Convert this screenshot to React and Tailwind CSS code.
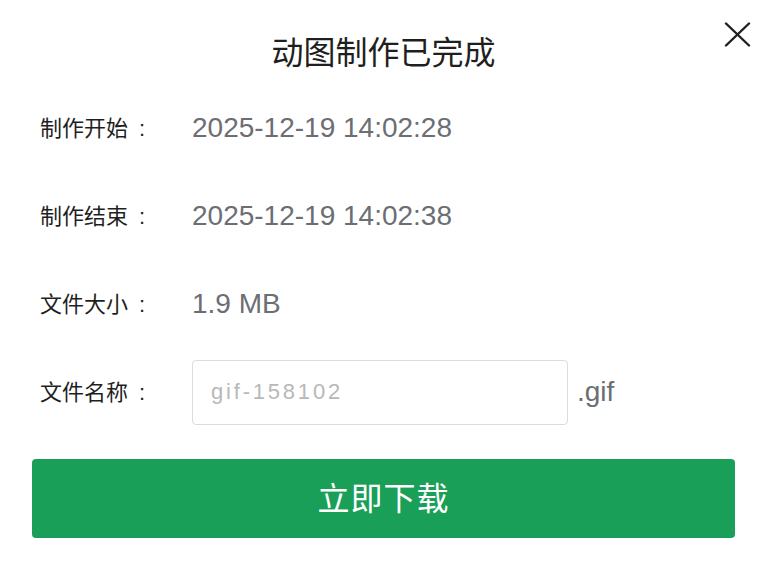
import React from 'react';

const rows = [
    { label: '制作开始', value: '2025-12-19 14:02:28' },
    { label: '制作结束', value: '2025-12-19 14:02:38' },
    { label: '文件大小', value: '1.9 MB' },
];

const FONT = "font-['Liberation_Sans','Noto_Sans_CJK_SC',sans-serif]";

const Label = ({ text }) => (
    <div className="w-[160px] shrink-0 pl-[8px] text-[22px] text-[#1f1f1f] flex items-center">
        <span>{text}</span>
        <span className="ml-[11px]">:</span>
    </div>
);

export default function App() {
    return (
        <div className={`relative w-full h-[567px] bg-white px-[32px] ${FONT}`}>
            {/* close button */}
            <button className="absolute top-[22px] right-[16px] text-[#1f1f1f]">
                <svg width="27" height="25" viewBox="0 0 27 25" fill="none" stroke="currentColor" strokeWidth="2.4" strokeLinecap="round">
                    <path d="M2 1.5 L25 23.5" />
                    <path d="M25 1.5 L2 23.5" />
                </svg>
            </button>

            <div className="h-[84px] pt-[33px] text-center">
                <h1 className="text-[32px] leading-[40px] text-[#1f1f1f]">动图制作已完成</h1>
            </div>

            {rows.map((r) => (
                <div key={r.label} className="h-[88px] flex items-center">
                    <Label text={r.label} />
                    <div className="text-[28px] text-[#6b6e73]">{r.value}</div>
                </div>
            ))}

            <div className="h-[88px] flex items-center">
                <Label text="文件名称" />
                <input
                    type="text"
                    placeholder="gif-158102"
                    className="w-[376px] h-[65px] border border-[#dcdcdc] rounded-[4px] px-[18px] text-[22px] tracking-[2.8px] text-[#444] placeholder:text-[#b8b8b8] outline-none"
                />
                <span className="ml-[9px] text-[28px] text-[#6b6e73]">.gif</span>
            </div>

            <button className="mt-[23px] w-full h-[79px] rounded-[4px] bg-[#1a9f58] text-white text-[32px] tracking-[1px]">
                立即下载
            </button>
        </div>
    );
}
